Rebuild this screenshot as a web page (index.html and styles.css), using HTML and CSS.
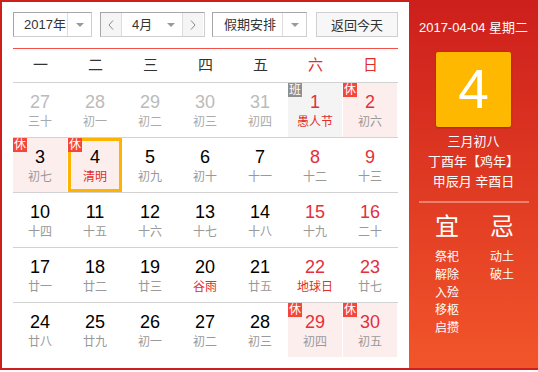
FILE: index.html
```html
<!DOCTYPE html>
<html lang="zh-CN">
<head>
  <meta charset="UTF-8" />
  <title>万年历</title>
  <link rel="stylesheet" href="styles.css">
</head>
<body>
  <div class="calendar">
    <div class="main">
      <div class="toolbar">
        <div class="select year">
          <span class="select-text">2017年</span>
          <span class="select-arrow"><i class="caret"></i></span>
        </div>
        <div class="select month">
          <span class="nav-btn">
            <svg width="6" height="10" viewBox="0 0 6 10"><polyline points="5,0.5 1,5 5,9.5" fill="none" stroke="#888" stroke-width="1"/></svg>
          </span>
          <span class="select-text">4月<i class="caret"></i></span>
          <span class="nav-btn">
            <svg width="6" height="10" viewBox="0 0 6 10"><polyline points="1,0.5 5,5 1,9.5" fill="none" stroke="#888" stroke-width="1"/></svg>
          </span>
        </div>
        <div class="select holiday">
          <span class="select-text">假期安排</span>
          <span class="select-arrow"><i class="caret"></i></span>
        </div>
        <button class="btn-today">返回今天</button>
      </div>

      <div class="weekhead">
        <span>一</span><span>二</span><span>三</span><span>四</span><span>五</span>
        <span class="weekend">六</span><span class="weekend">日</span>
      </div>

      <div class="week">
        <div class="day other"><b>27</b><small>三十</small></div>
        <div class="day other"><b>28</b><small>初一</small></div>
        <div class="day other"><b>29</b><small>初二</small></div>
        <div class="day other"><b>30</b><small>初三</small></div>
        <div class="day other"><b>31</b><small>初四</small></div>
        <div class="day work weekend"><span class="badge gray">班</span><b>1</b><small class="fest">愚人节</small></div>
        <div class="day rest weekend"><span class="badge">休</span><b>2</b><small>初六</small></div>
      </div>
      <div class="week">
        <div class="day rest"><span class="badge">休</span><b>3</b><small>初七</small></div>
        <div class="day rest today"><span class="badge">休</span><b>4</b><small class="fest">清明</small></div>
        <div class="day"><b>5</b><small>初九</small></div>
        <div class="day"><b>6</b><small>初十</small></div>
        <div class="day"><b>7</b><small>十一</small></div>
        <div class="day weekend"><b>8</b><small>十二</small></div>
        <div class="day weekend"><b>9</b><small>十三</small></div>
      </div>
      <div class="week">
        <div class="day"><b>10</b><small>十四</small></div>
        <div class="day"><b>11</b><small>十五</small></div>
        <div class="day"><b>12</b><small>十六</small></div>
        <div class="day"><b>13</b><small>十七</small></div>
        <div class="day"><b>14</b><small>十八</small></div>
        <div class="day weekend"><b>15</b><small>十九</small></div>
        <div class="day weekend"><b>16</b><small>二十</small></div>
      </div>
      <div class="week">
        <div class="day"><b>17</b><small>廿一</small></div>
        <div class="day"><b>18</b><small>廿二</small></div>
        <div class="day"><b>19</b><small>廿三</small></div>
        <div class="day"><b>20</b><small class="fest">谷雨</small></div>
        <div class="day"><b>21</b><small>廿五</small></div>
        <div class="day weekend"><b>22</b><small class="fest">地球日</small></div>
        <div class="day weekend"><b>23</b><small>廿七</small></div>
      </div>
      <div class="week">
        <div class="day"><b>24</b><small>廿八</small></div>
        <div class="day"><b>25</b><small>廿九</small></div>
        <div class="day"><b>26</b><small>初一</small></div>
        <div class="day"><b>27</b><small>初二</small></div>
        <div class="day"><b>28</b><small>初三</small></div>
        <div class="day rest weekend"><span class="badge">休</span><b>29</b><small>初四</small></div>
        <div class="day rest weekend"><span class="badge">休</span><b>30</b><small>初五</small></div>
      </div>
    </div>

    <div class="side">
      <p class="side-date">2017-04-04 星期二</p>
      <div class="big-day">4</div>
      <p class="lunar">三月初八</p>
      <p class="lunar">丁酉年<span class="bracket">【</span>鸡年<span class="bracket">】</span></p>
      <p class="lunar">甲辰月 辛酉日</p>
      <div class="divider"></div>
      <div class="yiji">
        <div class="yiji-col">
          <h3>宜</h3>
          <ul>
            <li>祭祀</li>
            <li>解除</li>
            <li>入殓</li>
            <li>移柩</li>
            <li>启攒</li>
          </ul>
        </div>
        <div class="yiji-col">
          <h3>忌</h3>
          <ul>
            <li>动土</li>
            <li>破土</li>
          </ul>
        </div>
      </div>
    </div>
  </div>
</body>
</html>
```

FILE: styles.css
```css
* {
  box-sizing: border-box;
}

body {
  margin: 0;
  font-family: "Liberation Sans", "Noto Sans CJK SC", sans-serif;
  background: #fff;
}

.calendar {
  display: flex;
  width: 538px;
  height: 370px;
  border: 2px solid #cf1f1c;
  border-right: none;
}

/* 左侧日历 */
.main {
  width: 407px;
  padding: 10px 11px 0 11px;
  background: #fff;
}

.toolbar {
  display: flex;
  height: 25px;
  font-size: 13px;
  color: #333;
}

.select {
  display: flex;
  height: 25px;
  border: 1px solid;
  border-color: #a6a6a6 #cfcfcf #cfcfcf #a6a6a6;
  background: #fff;
}

.select-text {
  display: flex;
  align-items: center;
  line-height: 23px;
}

.select-arrow {
  display: flex;
  align-items: center;
  justify-content: center;
  border-left: 1px solid #ddd;
}

.caret {
  display: inline-block;
  width: 0;
  height: 0;
  border-top: 4px solid #999;
  border-left: 4px solid transparent;
  border-right: 4px solid transparent;
}

.year {
  width: 79px;
}

.year .select-text {
  width: 54px;
  padding-left: 10px;
}

.year .select-arrow {
  width: 24px;
}

.month {
  width: 105px;
  margin-left: 8px;
}

.nav-btn {
  display: flex;
  align-items: center;
  justify-content: center;
  width: 22px;
  background: #f5f5f5;
}

.month .nav-btn:first-child {
  width: 21px;
  border-right: 1px solid #ddd;
}

.month .nav-btn:last-child {
  width: 21px;
  border-left: 1px solid #ddd;
}

.month .select-text {
  width: 60px;
  padding-left: 10px;
}

.month .caret {
  margin-left: 15px;
}

.holiday {
  width: 95px;
  margin-left: 7px;
}

.holiday .select-text {
  width: 69px;
  padding-left: 11px;
}

.holiday .select-arrow {
  width: 24px;
}

.btn-today {
  width: 82px;
  height: 25px;
  margin-left: 9px;
  padding: 0;
  font-family: inherit;
  font-size: 13px;
  color: #333;
  background: #f7f7f7;
  border: 1px solid #cfcfcf;
}

.weekhead {
  display: grid;
  grid-template-columns: repeat(7, 55px);
  margin-top: 11px;
  border-top: 1px solid #f4504a;
  height: 34px;
  line-height: 32px;
  font-size: 15px;
  text-align: center;
  color: #333;
}

.weekhead .weekend {
  color: #e02e2e;
}

.week {
  display: grid;
  grid-template-columns: repeat(7, 55px);
  border-top: 1px solid #d2d2d2;
}

.day {
  position: relative;
  height: 54px;
  padding-top: 9px;
  border-right: 1px solid transparent;
  background-clip: padding-box;
  text-align: center;
}

.day b {
  display: block;
  font-weight: normal;
  font-size: 18px;
  line-height: 20px;
  color: #000;
}

.day small {
  display: block;
  font-size: 12px;
  line-height: 20px;
  color: #999;
}

.day.weekend b {
  color: #e3303a;
}

.day.other b {
  color: #bbb;
}

.day.other small {
  color: #aaa;
}

.day small.fest {
  color: #e02e2e;
}

.day.rest {
  background-color: #fdeeee;
}

.day.work {
  background-color: #f4f4f4;
}

.day.today {
  box-shadow: inset 0 0 0 3px #fdb400;
}

.badge {
  position: absolute;
  top: 0;
  left: 0;
  width: 14px;
  height: 14px;
  font-size: 12px;
  line-height: 14px;
  color: #fff;
  background: #f4473a;
}

.badge.gray {
  background: #8f8f8f;
}

/* 右侧详情 */
.side {
  width: 129px;
  padding-top: 18px;
  color: #fff;
  text-align: center;
  background: linear-gradient(#cd1f1c, #f2552a);
}

.side p {
  margin: 0;
}

.side-date {
  font-size: 13px;
  line-height: 16px;
}

.big-day {
  width: 75px;
  height: 75px;
  margin: 16px auto 0;
  font-size: 55px;
  line-height: 75px;
  background: #feb800;
  border-radius: 2px;
  box-shadow: 0 1px 2px rgba(0,0,0,0.25);
}

.lunar {
  font-size: 13px;
  line-height: 20px;
}

.big-day + .lunar {
  margin-top: 5px;
}

.bracket {
  display: inline-block;
  width: 13px;
  text-align: center;
}

.divider {
  width: 110px;
  height: 2px;
  margin: 9px auto 0;
  background: rgba(255,255,255,0.35);
}

.yiji {
  display: flex;
  gap: 31px;
  padding-left: 26px;
  margin-top: 12px;
  text-align: left;
}

.yiji-col {
  width: 24px;
}

.yiji h3 {
  margin: 0;
  font-size: 24px;
  font-weight: normal;
  line-height: 24px;
}

.yiji ul {
  list-style: none;
  margin: 10px 0 0;
  padding: 0;
  font-size: 12px;
  line-height: 17.8px;
}
```
